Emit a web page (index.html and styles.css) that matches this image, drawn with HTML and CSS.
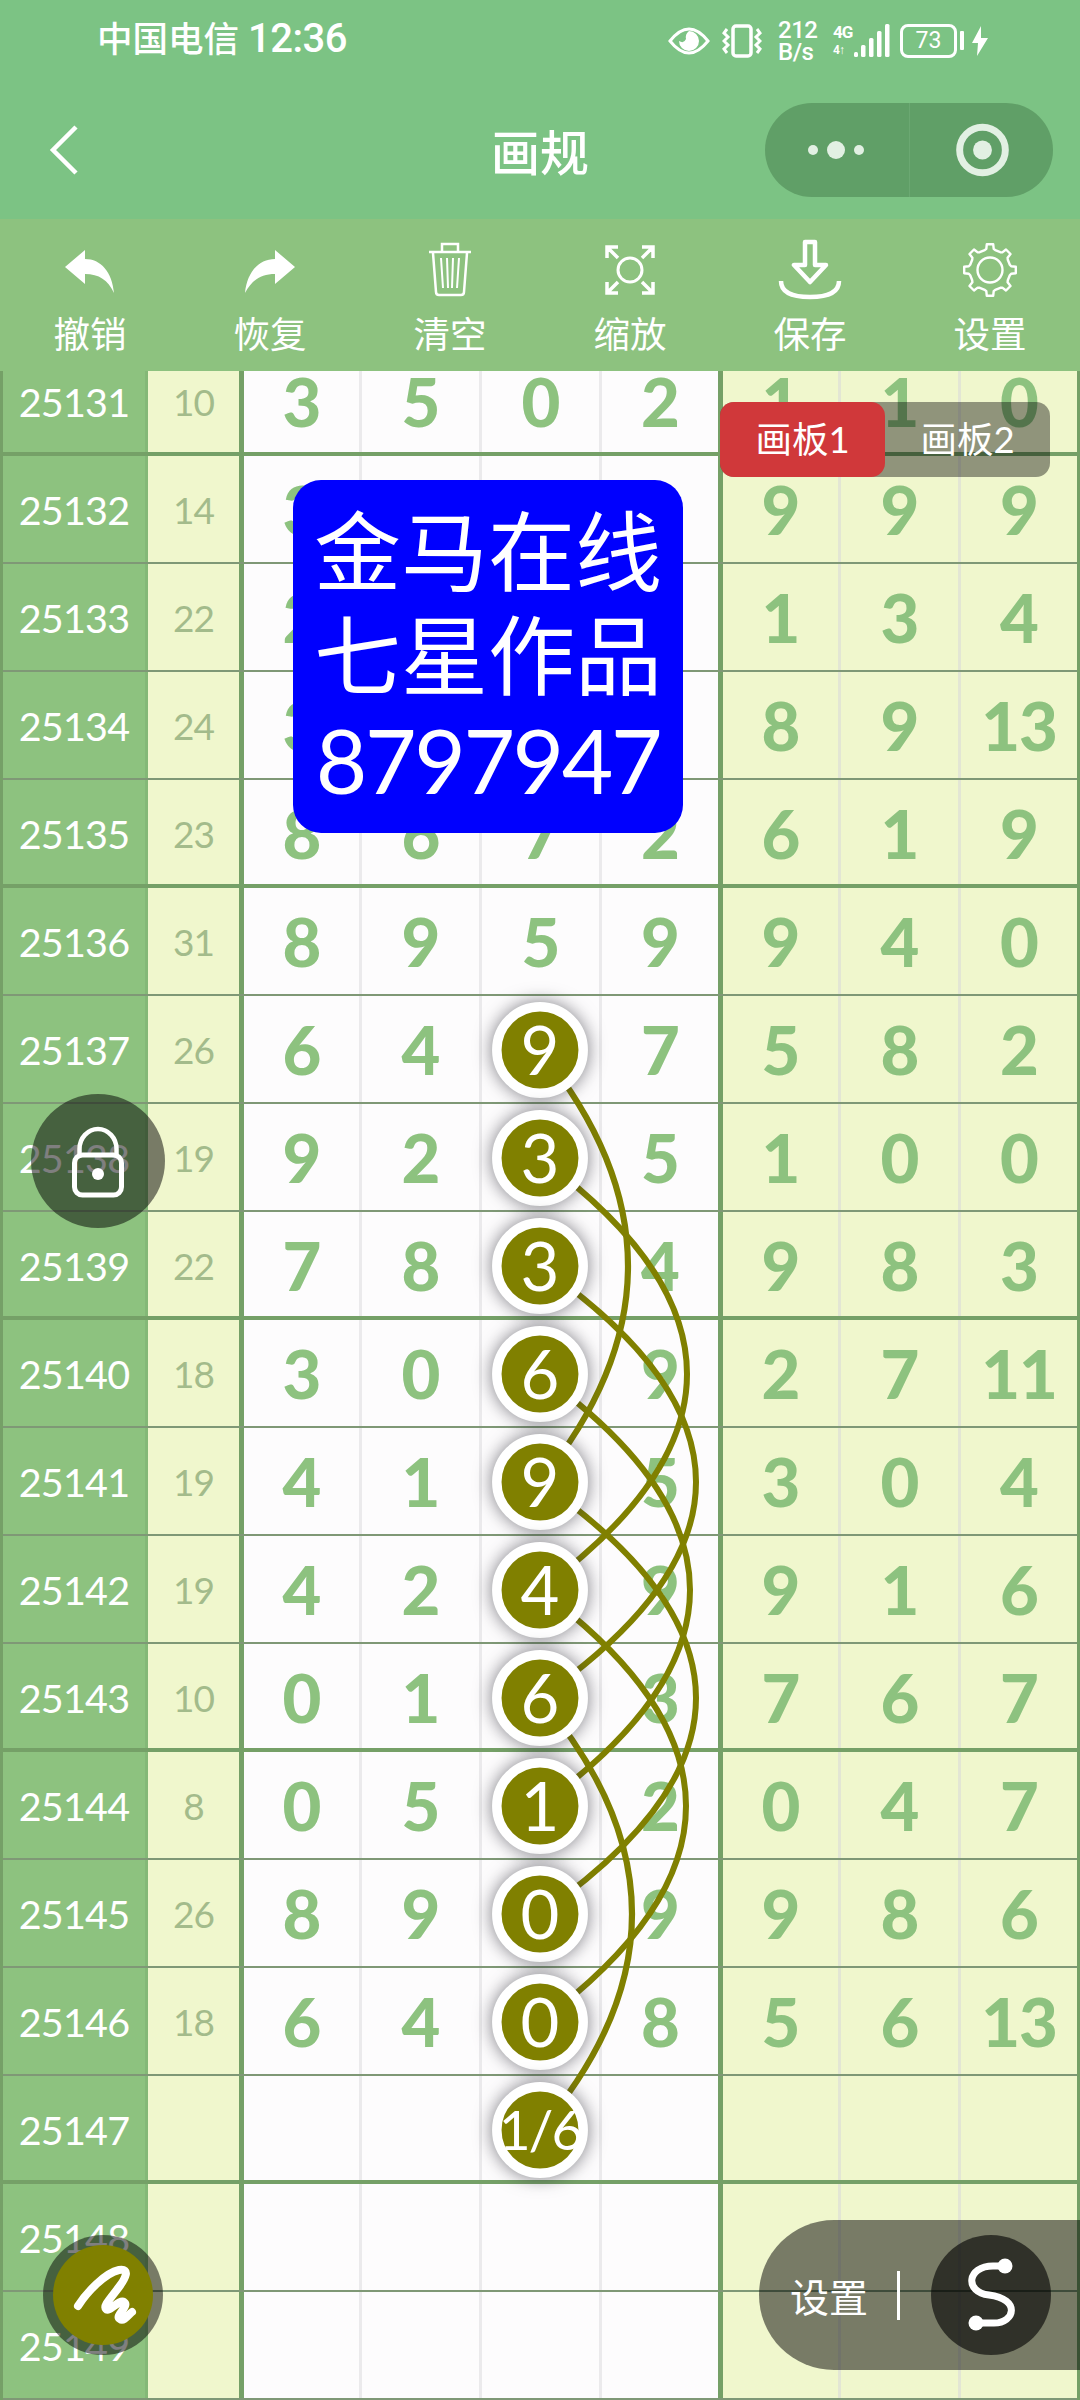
FILE: index.html
```html
<!DOCTYPE html>
<html lang="zh-CN">
<head>
    <meta charset="UTF-8">
    <meta name="viewport" content="width=device-width, initial-scale=1.0">
    <title>画规</title>
    <link rel="stylesheet" href="styles.css">
</head>
<body>
    <header class="header">
        <div class="status-bar">
            <div class="carrier">中国电信 <span class="clock">12:36</span></div>
            <div class="status-icons">
                <svg class="eye" width="42" height="30" viewBox="0 0 42 30">
                    <path d="M2 15 Q21 -9 40 15 Q21 39 2 15Z" fill="none" stroke="#fff" stroke-width="3"/>
                    <path d="M21 5 A10 10 0 1 1 11 15 Q16 18 18 13 Q17 8 21 5Z" fill="#fff"/>
                </svg>
                <svg class="vibrate" width="40" height="34" viewBox="0 0 40 34" fill="none" stroke="#fff" stroke-width="3">
                    <rect x="11" y="2" width="18" height="30" rx="3" stroke-width="3.5"/>
                    <path d="M5 5 L2 9 L6 13 L2 17 L6 21 L2 25 L5 29M35 5 L38 9 L34 13 L38 17 L34 21 L38 25 L35 29"/>
                </svg>
                <div class="speed"><span>212</span><span>B/s</span></div>
                <div class="network"><span>4G</span><span class="sub">4↑</span></div>
                <svg class="signal" width="36" height="36" viewBox="0 0 36 36" fill="#fff">
                    <rect x="0" y="29" width="4" height="5" rx="1.5"/>
                    <rect x="7" y="22" width="4.5" height="12" rx="1.5"/>
                    <rect x="15" y="15" width="4.5" height="19" rx="1.5"/>
                    <rect x="23" y="8" width="4.5" height="26" rx="1.5"/>
                    <rect x="31" y="1" width="4.5" height="33" rx="1.5"/>
                </svg>
                <div class="battery">73</div>
                <svg class="bolt" width="16" height="30" viewBox="0 0 16 30">
                    <path d="M9 0 L0 17 H6 L5 30 L16 12 H9Z" fill="#fff"/>
                </svg>
            </div>
        </div>
        <div class="nav-bar">
            <svg class="back" width="32" height="54" viewBox="0 0 32 54">
                <path d="M28 4 L5 27 L28 50" fill="none" stroke="#fff" stroke-width="4.5"/>
            </svg>
            <h1>画规</h1>
            <div class="capsule">
                <svg width="144" height="94" viewBox="0 0 144 94" fill="#e2f0e3">
                    <circle cx="48" cy="47" r="5"/>
                    <circle cx="71" cy="47" r="9"/>
                    <circle cx="94" cy="47" r="5"/>
                </svg>
                <svg class="close" width="144" height="94" viewBox="0 0 144 94">
                    <circle cx="73" cy="47" r="23" fill="none" stroke="#e2f0e3" stroke-width="7"/>
                    <circle cx="73" cy="47" r="9.5" fill="#e2f0e3"/>
                </svg>
            </div>
        </div>
    </header>

    <nav class="toolbar">
        <div class="tool">
            <svg width="64" height="64" viewBox="0 0 64 64">
                <path d="M7 29 L27 12 V21 C43 21 54 34 56 55 C50 42 41 36 27 36 V46Z" fill="#fff"/>
            </svg>
            <span>撤销</span>
        </div>
        <div class="tool">
            <svg width="64" height="64" viewBox="0 0 64 64">
                <path d="M57 29 L37 12 V21 C21 21 9 34 7 55 C14 42 23 36 37 36 V46Z" fill="#fff"/>
            </svg>
            <span>恢复</span>
        </div>
        <div class="tool">
            <svg width="64" height="64" viewBox="0 0 64 64" fill="none" stroke="#fff" stroke-width="2.5">
                <path d="M11 14 H53M24 13 V6 H40 V13M15 15 L18 54 Q18 57 21 57 H43 Q46 57 46 54 L49 15"/>
                <path d="M23 20 L25 50M29 20 L30 50M35 20 L34 50M41 20 L39 50" stroke-width="2"/>
            </svg>
            <span>清空</span>
        </div>
        <div class="tool">
            <svg width="64" height="64" viewBox="0 0 64 64" fill="none" stroke="#fff" stroke-width="3.5">
                <circle cx="32" cy="32" r="12" stroke-width="3"/>
                <path d="M9 20 V9 H20M9 9 L20 20M44 9 H55 V20M55 9 L44 20M9 44 V55 H20M9 55 L20 44M55 44 V55 H44M55 55 L44 44"/>
            </svg>
            <span>缩放</span>
        </div>
        <div class="tool">
            <svg width="64" height="64" viewBox="0 0 64 64" fill="none" stroke="#fff" stroke-width="4.5" stroke-linejoin="round">
                <path d="M27 4 H37 V27 H48 L32 44 L16 27 H27Z"/>
                <path d="M3 43 Q3 59 32 59 Q61 59 61 43"/>
            </svg>
            <span>保存</span>
        </div>
        <div class="tool">
            <svg width="64" height="64" viewBox="0 0 64 64" fill="none" stroke="#fff" stroke-width="2.4" stroke-linejoin="round">
                <circle cx="32" cy="32" r="12.5"/>
                <path id="gear"/>
            </svg>
            <span>设置</span>
        </div>
    </nav>

    <main class="board">
        <div class="table" id="table"></div>
        <svg class="drawing" id="drawing" width="1080" height="2029" viewBox="0 371 1080 2029"></svg>

        <div class="note">
            <div>金马在线</div>
            <div>七星作品</div>
            <div class="note-number">8797947</div>
        </div>

        <div class="tabs">
            <div class="tab active">画板1</div>
            <div class="tab">画板2</div>
        </div>

        <div class="lock">
            <svg width="60" height="76" viewBox="0 0 60 76" fill="none" stroke="#fff" stroke-width="5">
                <rect x="6.5" y="32" width="47" height="40" rx="8"/>
                <path d="M11.5 32 V26 A18.5 20 0 0 1 48.5 26 V32" stroke-width="4.5"/>
                <circle cx="30" cy="51" r="6" fill="#fff" stroke="none"/>
            </svg>
        </div>

        <div class="brush">
            <svg width="100" height="100" viewBox="0 0 100 100">
                <path d="M25 61 C34 47 52 28 66 25 C78 23 72 34 66 42 C57 54 50 61 53 64 C56 68 66 54 71 57 C77 61 61 71 67 74 C71 77 76 69 79 67" fill="none" stroke="#fff" stroke-width="8" stroke-linecap="round" stroke-linejoin="round"/>
            </svg>
        </div>

        <div class="settings">
            <span class="settings-label">设置</span>
            <span class="divider"></span>
            <div class="curve">
                <svg width="120" height="120" viewBox="0 0 120 120">
                    <path d="M75 31 H62 C36 31 33 57 58 60 C90 64 84 88 63 88 H46" fill="none" stroke="#fff" stroke-width="7"/>
                    <circle cx="74" cy="31" r="7.5" fill="#fff"/>
                    <circle cx="45" cy="88" r="7.5" fill="#fff"/>
                </svg>
            </div>
        </div>
    </main>

    <script src="script.js"></script>
</body>
</html>
```
FILE: styles.css
```css
* {
    margin: 0;
    padding: 0;
    box-sizing: border-box;
}

:root {
    --header: #7cc384;
    --green: #8dc27f;
    --line: #75a067;
    --yellow: #f0f7cd;
    --olive: #808000;
}

body {
    width: 1080px;
    height: 2400px;
    overflow: hidden;
    background: #fdfcfd;
    color: #fff;
    font-family: Lato, "Noto Sans CJK SC", sans-serif;
}

.header {
    height: 219px;
    background: var(--header);
}

.status-bar {
    height: 82px;
    padding: 0 92px 0 97px;
    display: flex;
    justify-content: space-between;
    align-items: center;
}

.carrier {
    font-size: 35.5px;
    font-weight: 500;
    line-height: 50px;
    white-space: pre;
    transform: translateY(-2px);
}

.clock {
    font-family: Roboto, sans-serif;
    font-weight: 500;
    font-size: 40px;
    letter-spacing: -0.5px;
}

.status-icons {
    display: flex;
    align-items: center;
}

.vibrate {
    margin-left: 12px;
}

.speed {
    display: flex;
    flex-direction: column;
    width: 40px;
    margin-left: 16px;
    font-family: Roboto, sans-serif;
    font-size: 24px;
    font-weight: 500;
    line-height: 22px;
    letter-spacing: -0.5px;
}

.network {
    display: flex;
    flex-direction: column;
    width: 21px;
    margin-left: 15px;
    font-family: Roboto, sans-serif;
    font-size: 17px;
    font-weight: 700;
    line-height: 18px;
    letter-spacing: -1px;
    white-space: nowrap;
}

.network .sub {
    font-size: 12px;
}

.battery {
    position: relative;
    width: 57px;
    height: 34px;
    margin-left: 10px;
    border: 3.5px solid #fff;
    border-radius: 8px;
    font-family: Roboto, sans-serif;
    font-size: 23px;
    line-height: 28px;
    text-align: center;
}

.battery::after {
    content: "";
    position: absolute;
    right: -10px;
    top: 4px;
    width: 4px;
    height: 19px;
    background: #fff;
    border-radius: 1px;
}

.bolt {
    margin-left: 15px;
}

.nav-bar {
    height: 136px;
    display: grid;
    grid-template-columns: 443px 98px 1fr;
    align-items: center;
    padding: 0 27px 0 48px;
}

.nav-bar h1 {
    font-size: 49px;
    font-weight: 500;
    line-height: 60px;
    white-space: nowrap;
    transform: translateY(2px);
}

.capsule {
    display: flex;
    justify-self: end;
    width: 288px;
    height: 94px;
    border-radius: 47px;
    background: #609f67;
}

.capsule .close {
    border-left: 1px solid #6ba872;
}

.toolbar {
    height: 152px;
    display: grid;
    grid-template-columns: repeat(6, 180px);
    background: var(--green);
}

.tool {
    display: flex;
    flex-direction: column;
    align-items: center;
    padding-top: 19px;
    font-size: 36.5px;
    line-height: 64px;
}

.board {
    position: relative;
    height: 2029px;
    overflow: hidden;
}

/* scrolled part way into the first row */
.table {
    margin-top: -23px;
    border-left: 3px solid var(--line);
    border-right: 3px solid var(--line);
}

.row {
    display: grid;
    grid-template-columns: 145px 96px 118px 120px 120px 121px 118px 120px 116px;
    height: 108px;
    border-bottom: 2px solid #7f9876;
}

.row.group {
    border-bottom: 4px solid var(--line);
}

.cell {
    display: flex;
    align-items: center;
    justify-content: center;
    height: 106px;
    border-right: 3px solid #ebeaec;
    color: var(--green);
    font-size: 67px;
    font-weight: 900;
    letter-spacing: -1px;
}

.row.group .cell {
    height: 104px;
    padding-top: 2px;
}

.cell.issue {
    background: var(--green);
    border-color: #84b877;
    color: #fff;
    font-size: 39.5px;
    font-weight: 400;
    letter-spacing: -0.8px;
}

.cell.sum {
    background: var(--yellow);
    border-right: 5px solid var(--line);
    color: #a3bb8b;
    font-size: 37px;
    font-weight: 400;
}

.cell.thick {
    border-right: 5px solid var(--line);
}

.cell.extra {
    background: var(--yellow);
    border-color: #e3e6d4;
}

.cell.extra:last-child {
    border-right: none;
}

.drawing {
    position: absolute;
    left: 0;
    top: 0;
}

.link {
    fill: none;
    stroke: var(--olive);
    stroke-width: 6;
}

.node circle {
    fill: var(--olive);
    stroke: #fff;
    stroke-width: 9.5;
    filter: drop-shadow(0 0 9px rgba(40, 40, 50, 0.6));
}

.node text {
    fill: #fff;
    font-size: 67px;
    text-anchor: middle;
}

.node .small {
    font-size: 55px;
    letter-spacing: -2px;
}

.note {
    position: absolute;
    left: 293px;
    top: 109px;
    width: 390px;
    height: 353px;
    padding-top: 20px;
    border-radius: 28px;
    background: #0000fe;
    font-size: 87px;
    line-height: 104px;
    text-align: center;
    white-space: nowrap;
}

.note-number {
    font-size: 89px;
    line-height: 104px;
    letter-spacing: -2.4px;
}

.tabs {
    position: absolute;
    left: 720px;
    top: 31px;
    display: flex;
    width: 330px;
    height: 75px;
    border-radius: 14px;
    background: rgba(0, 0, 0, 0.4);
}

.tab {
    flex: 1;
    border-radius: 14px;
    font-size: 36.5px;
    line-height: 75px;
    text-align: center;
}

.tab.active {
    background: #d0383a;
}

.lock {
    position: absolute;
    left: 31px;
    top: 723px;
    display: flex;
    align-items: center;
    justify-content: center;
    width: 134px;
    height: 134px;
    border-radius: 50%;
    background: rgba(0, 0, 0, 0.5);
}

.brush {
    position: absolute;
    left: 43px;
    top: 1864px;
    width: 120px;
    height: 120px;
    padding: 10px;
    border-radius: 50%;
    background: rgba(0, 0, 0, 0.5);
}

.brush svg {
    display: block;
    border-radius: 50%;
    background: var(--olive);
}

.settings {
    position: absolute;
    left: 759px;
    top: 1849px;
    display: flex;
    align-items: center;
    width: 321px;
    height: 150px;
    padding-left: 31px;
    border-radius: 75px 0 0 75px;
    background: rgba(0, 0, 0, 0.5);
}

.settings-label {
    font-size: 39px;
}

.divider {
    width: 3px;
    height: 49px;
    margin: 0 31px 0 29px;
    background: #fff;
}

.curve {
    width: 120px;
    height: 120px;
    border-radius: 50%;
    background: rgba(0, 0, 0, 0.6);
}
```
FILE: script.js
```js
// issue, sum, four digits, three extra columns
const rows = [
    [25131, 10, 3, 5, 0, 2, 1, 1, 0],
    [25132, 14, 3, '', '', '', 9, 9, 9],
    [25133, 22, 2, '', '', '', 1, 3, 4],
    [25134, 24, 3, '', '', '', 8, 9, 13],
    [25135, 23, 8, 6, 7, 2, 6, 1, 9],
    [25136, 31, 8, 9, 5, 9, 9, 4, 0],
    [25137, 26, 6, 4, '', 7, 5, 8, 2],
    [25138, 19, 9, 2, '', 5, 1, 0, 0],
    [25139, 22, 7, 8, '', 4, 9, 8, 3],
    [25140, 18, 3, 0, '', 9, 2, 7, 11],
    [25141, 19, 4, 1, '', 5, 3, 0, 4],
    [25142, 19, 4, 2, '', 9, 9, 1, 6],
    [25143, 10, 0, 1, '', 3, 7, 6, 7],
    [25144, 8, 0, 5, '', 2, 0, 4, 7],
    [25145, 26, 8, 9, '', 9, 9, 8, 6],
    [25146, 18, 6, 4, '', 8, 5, 6, 13],
    [25147, '', '', '', '', '', '', '', ''],
    [25148, '', '', '', '', '', '', '', ''],
    [25149, '', '', '', '', '', '', '', '']
];

const kinds = ['issue', 'sum', '', '', '', 'thick', 'extra', 'extra', 'extra'];

document.getElementById('table').innerHTML = rows.map((row, i) => {
    const cells = row.map((value, c) => `<div class="cell ${kinds[c]}">${value}</div>`).join('');
    return `<div class="row${i % 4 === 0 ? ' group' : ''}">${cells}</div>`;
}).join('');

// circled numbers and the curves between every fourth pair
const nodes = ['9', '3', '3', '6', '9', '4', '6', '1', '0', '0', '1/6'];
const bulge = [628, 687, 696, 690, 696, 686, 632];
const nodeY = i => 1050 + i * 108;

const circles = nodes.map((label, i) => `
    <g class="node">
        <circle cx="540" cy="${nodeY(i)}" r="43.2"/>
        <text x="540" y="${nodeY(i) + (label.length > 1 ? 20 : 24.5)}" class="${label.length > 1 ? 'small' : ''}">${label}</text>
    </g>`).join('');

const links = bulge.map((x, i) =>
    `<path class="link" d="M540 ${nodeY(i)} Q${2 * x - 540} ${nodeY(i + 2)} 540 ${nodeY(i + 4)}"/>`
).join('');

document.getElementById('drawing').innerHTML = links + circles;

// gear outline with eight teeth
const points = [];
for (let i = 0; i < 8; i++) {
    [[-15, 20.5], [-10, 21.5], [-7, 26], [7, 26], [10, 21.5], [15, 20.5]].forEach(([deg, r]) => {
        const a = (i * 45 + deg) * Math.PI / 180;
        points.push((32 + r * Math.sin(a)).toFixed(1) + ' ' + (32 - r * Math.cos(a)).toFixed(1));
    });
}
document.getElementById('gear').setAttribute('d', 'M' + points.join('L') + 'Z');
```
